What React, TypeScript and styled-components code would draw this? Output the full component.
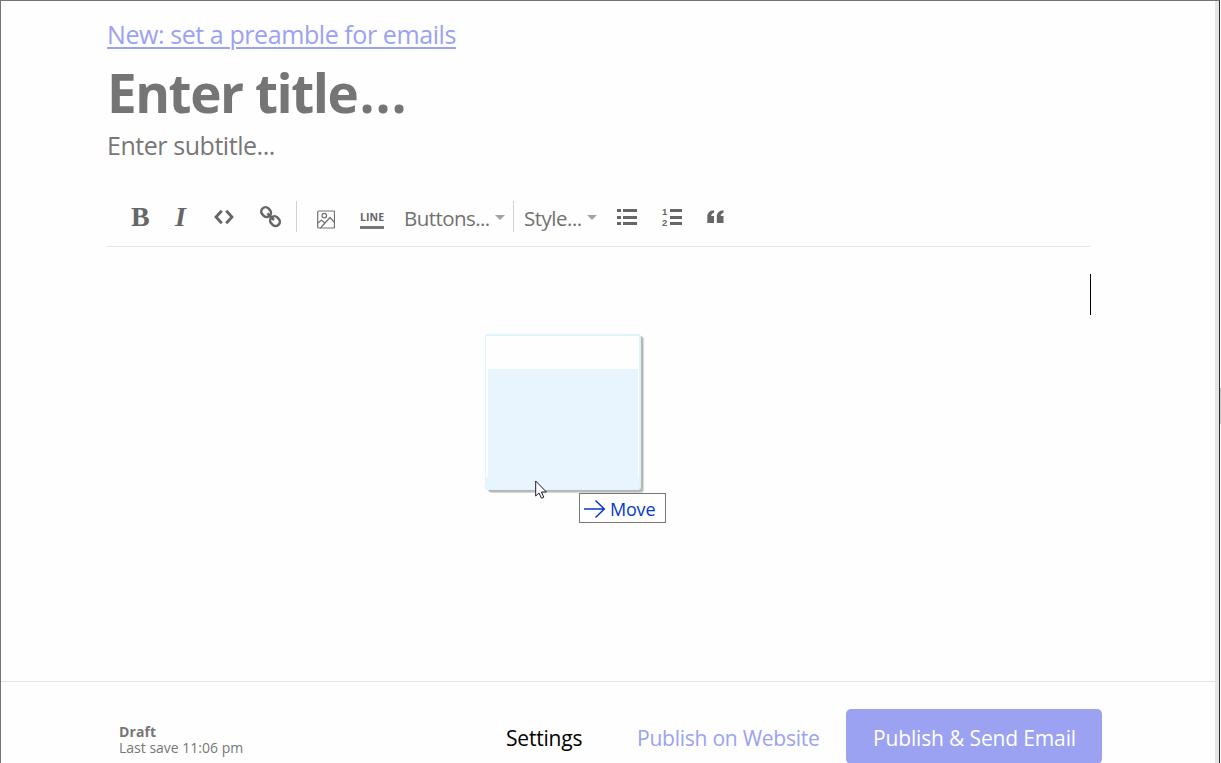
import React from 'react';
import styled, { createGlobalStyle } from 'styled-components';

const Global = createGlobalStyle`
  * { box-sizing: border-box; }
  body { margin: 0; overflow: hidden; background: #fff; font-family: 'Open Sans', 'Noto Sans', sans-serif; }
`;

const Frame = styled.div`
  width: 1221px;
  height: 763px;
  display: flex;
  overflow: hidden;
`;
const Page = styled.div`
  position: relative;
  width: 1215px;
  flex: none;
  display: flex;
  flex-direction: column;
  background: #fefefe;
  border-top: 1px solid #757575;
  border-left: 1px solid #757575;
`;
const Gutter = styled.div`
  width: 5px;
  background: #e6e6e6;
  border-top: 1px solid #757575;
  border-right: 1px solid #2b2b2b;
`;
const Edge = styled.div`
  width: 1px;
  padding-top: 388px;
`;
const Thumb = styled.div`
  height: 36px;
  background: #cdcdcd;
`;
const Editor = styled.main`
  flex: none;
  height: 680px;
  width: 1089px;
  padding: 15px 0 0 106px;
`;
const Line = styled.div<{ $size: number; $line: number; $spacing?: number; $gap?: number }>`
  font-size: ${p => p.$size}px;
  line-height: ${p => p.$line}px;
  letter-spacing: ${p => p.$spacing ?? 0}px;
  margin-top: ${p => p.$gap ?? 0}px;
  color: #777;
  white-space: nowrap;
`;
const Preamble = styled.a`
  color: #9ba2f1;
  text-decoration: underline;
  text-decoration-thickness: 2px;
  text-underline-offset: 3px;
`;
const Title = styled(Line)`
  font-weight: 700;
  color: #757575;
`;
const Dots = styled.span`
  margin-left: 2px;
  letter-spacing: 0.9px;
`;
const Toolbar = styled.div`
  display: flex;
  align-items: center;
  height: 58px;
  margin-top: 26px;
  padding-bottom: 2px;
  border-bottom: 1px solid #e2e1ef;
  color: #666;
`;
const Tool = styled.div<{ $w: number }>`
  display: flex;
  flex: none;
  justify-content: flex-start;
  width: ${p => p.$w}px;
  svg { display: block; }
`;
const Glyph = styled.span<{ $italic?: boolean }>`
  font: ${p => (p.$italic ? 'italic ' : '')}bold 28px/34px 'Liberation Serif', serif;
`;
const Divider = styled.i`
  width: 1px;
  height: 31px;
  background: #d2d2d2;
`;
const LineTool = styled.div`
  width: 24px;
  height: 18px;
  margin: 6px 0 0 1px;
  border-bottom: 3px solid #777;
  font-size: 10.5px;
  line-height: 13px;
  font-weight: 700;
  letter-spacing: 0.1px;
`;
const Menu = styled.div<{ $gap: number; $spacing: number }>`
  display: flex;
  align-items: center;
  gap: ${p => p.$gap}px;
  padding-top: 2px;
  font-size: 20.5px;
  line-height: 30px;
  letter-spacing: ${p => p.$spacing}px;
  color: #717171;
  white-space: nowrap;
`;
const Caret = styled.i`
  border: 5.5px solid transparent;
  border-top-color: #a3a3a3;
  border-top-width: 5px;
  border-bottom: 0;
`;
const Cursor = styled.div`
  width: 1px;
  height: 41px;
  margin: 27px 0 0 983px;
  background: #000;
`;
const DragImage = styled.div`
  position: absolute;
  left: 484px;
  top: 333px;
  width: 155px;
  height: 156px;
  padding: 33px 1px 0;
  border: 1px solid #dff4fc;
  border-top-width: 2px;
  border-radius: 3px;
  background: linear-gradient(#fefefe 141px, #e8f5fe 141px);
  box-shadow: 1px 0 0 #d6f1f9, 3px 2px 0 #b7b9b9, 4px 3px 1px #d5d5d5;
`;
const DragFill = styled.div`
  height: 120px;
  margin-left: 1px;
  background: #e8f5fe;
`;
const Pointer = styled.svg`
  position: absolute;
  left: 534px;
  top: 479px;
`;
const MoveTip = styled.div`
  position: absolute;
  left: 578px;
  top: 492px;
  width: 87px;
  height: 30px;
  display: flex;
  align-items: center;
  gap: 4px;
  padding: 1px 0 0 4px;
  border: 1px solid #777;
  background: #fff;
  color: #0638cc;
  font-size: 18px;
  letter-spacing: -0.2px;
`;
const Footer = styled.footer`
  flex: none;
  display: flex;
  height: 83px;
  border-top: 1px solid #e1e1ea;
  padding: 27px 0 0 118px;
  white-space: nowrap;
`;
const Status = styled.div`
  width: 387px;
  padding-top: 15px;
  font-size: 14px;
  line-height: 16px;
  color: #777;
`;
const State = styled.div`
  font-weight: 700;
  letter-spacing: 0.1px;
`;
const Action = styled.div<{ $w: number; $color: string; $spacing: number }>`
  width: ${p => p.$w}px;
  font-size: 21px;
  line-height: 58px;
  letter-spacing: ${p => p.$spacing}px;
  color: ${p => p.$color};
`;
const Primary = styled(Action)`
  height: 55px;
  padding-left: 27px;
  border-radius: 5px;
  background: #9ba2f1;
`;

export default function App() {
  return (
    <Frame>
      <Global />
      <Page>
        <Editor>
          <Line $size={25} $line={36} $spacing={-0.42}><Preamble>New: set a preamble for emails</Preamble></Line>
          <Title $size={53} $line={64} $gap={9} $spacing={-1.45}>Enter title<Dots>...</Dots></Title>
          <Line $size={25} $line={36} $gap={2} $spacing={-0.45}>Enter subtitle...</Line>
          <Toolbar>
            <Tool $w={24} />
            <Tool $w={44}><Glyph>B</Glyph></Tool>
            <Tool $w={39}><Glyph $italic>I</Glyph></Tool>
            <Tool $w={46}>
              <svg width="20" height="16" viewBox="0 0 20 16" fill="none" stroke="#666" strokeWidth="2.8">
                <path d="M7.800 1.800 2 8l5.800 6.200M12.200 1.800 18 8l-5.800 6.200" />
              </svg>
            </Tool>
            <Tool $w={36}>
              <svg width="22" height="22" viewBox="0 0 22 22" fill="none" stroke="#666" strokeWidth="2.5">
                <rect x="1.100" y="1.900" width="10" height="8.400" rx="4" transform="rotate(45 6.100 6.100)" />
                <rect x="10" y="10.900" width="10" height="8.400" rx="4" transform="rotate(45 15 15.100)" />
                <path d="m7.500 7.500 6.500 6.500" />
              </svg>
            </Tool>
            <Divider />
            <Tool $w={20} />
            <Tool $w={42}>
              <svg width="18" height="24" viewBox="0 -2 18 24" fill="none" stroke="#717171" strokeWidth="1.2">
                <rect x=".7" y="4" width="16.800" height="17" rx="1" />
                <circle cx="7.300" cy="8.600" r="2.300" />
                <path d="m1 16 3.500-3 3.700 3.500M3.500 21 13 10.500l4.500 5" />
              </svg>
            </Tool>
            <Tool $w={45}><LineTool>LINE</LineTool></Tool>
            <Tool $w={109}><Menu $gap={5} $spacing={-0.56}>Buttons...<Caret /></Menu></Tool>
            <Divider />
            <Tool $w={10} />
            <Tool $w={93}><Menu $gap={5} $spacing={-0.5}>Style...<Caret /></Menu></Tool>
            <Tool $w={45}>
              <svg width="20" height="18" viewBox="0 0 20 18" fill="#666">
                <path d="M0 1h4v3H0zM0 8h4v3H0zM0 14h4v3H0zM6 1h14v3H6zM6 8h14v3H6zM6 14h14v3H6z" />
              </svg>
            </Tool>
            <Tool $w={45}>
              <svg width="21" height="24" viewBox="0 -3 21 24" fill="#666">
                <path d="M8 1h12v3H8zM8 8h12v3H8zM8 14h12v3H8z" />
                <text x="0" y="7" fontFamily="Liberation Sans" fontWeight="700" fontSize="9.500">1</text>
                <text x="0" y="17.500" fontFamily="Liberation Sans" fontWeight="700" fontSize="9.500">2</text>
              </svg>
            </Tool>
            <Tool $w={20}>
              <svg width="18" height="14" viewBox="0 0 18 14" fill="#666">
                <path d="M7 .3v2.800C5.200 3.400 4.300 4.400 4.200 6H7v7H.3V7C.3 3 2.500.6 7 .3zM16.500.3v2.800c-1.800.3-2.700 1.300-2.800 2.900h2.800v7H9.800V7c0-4 2.200-6.400 6.700-6.700z" />
              </svg>
            </Tool>
          </Toolbar>
          <Cursor />
        </Editor>
        <Footer>
          <Status><State>Draft</State>Last save 11:06 pm</Status>
          <Action $w={131} $color="#000" $spacing={-0.2}>Settings</Action>
          <Action $w={209} $color="#9ba2f1" $spacing={-0.24}>Publish on Website</Action>
          <Primary $w={256} $color="#fff" $spacing={-0.15}>Publish &amp; Send Email</Primary>
        </Footer>
        <DragImage><DragFill /></DragImage>
        <Pointer width="14" height="20" viewBox="0 0 14 20">
          <path d="M.7 1v15l3.300-3 2.400 5.200 2.400-1-2.400-5.200h5z" fill="#fff" stroke="#1b1b2b" strokeWidth="1" />
        </Pointer>
        <MoveTip>
          <svg width="22" height="20" viewBox="0 0 22 20" fill="none" stroke="#0638cc" strokeWidth="1.5">
            <path d="M0 10h20.500M11.500 1.500 20.300 10l-8.800 8.500" />
          </svg>
          Move
        </MoveTip>
      </Page>
      <Gutter />
      <Edge><Thumb /></Edge>
    </Frame>
  );
}
